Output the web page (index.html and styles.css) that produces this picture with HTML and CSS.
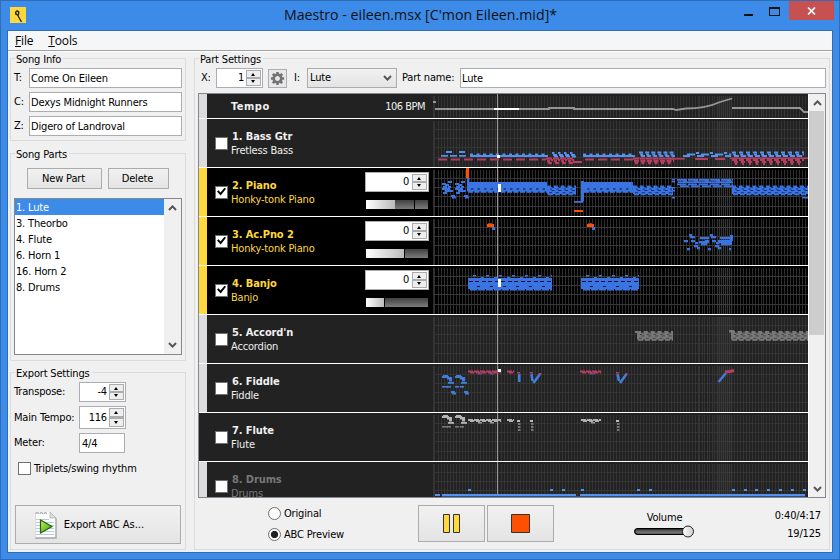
FILE: index.html
```html
<!DOCTYPE html>
<html lang="en">
<head>
<meta charset="utf-8">
<title>Maestro</title>
<link rel="stylesheet" href="styles.css">
</head>
<body>
<div class="window">
  <header class="titlebar">
    <svg class="app-icon" viewBox="0 0 16 16"><rect width="16" height="16" fill="#ffd93b"/><path d="M11.500 15 8.700 10 7.800 8 5.800 7 5.600 5.200 7.200 3.800 8.700 4.800 8.600 7 7.800 8.500" fill="none" stroke="#28240f" stroke-width="1.400"/></svg>
    <h1 class="title">Maestro - eileen.msx [C'mon Eileen.mid]*</h1>
    <div class="controls">
      <span class="minimize"></span>
      <span class="maximize"></span>
      <span class="close"><svg viewBox="0 0 9 8"><path d="M1 .5 8 7.5M8 .5 1 7.5" stroke="#fff" stroke-width="1.7"/></svg></span>
    </div>
  </header>
  <div class="client">
    <nav class="menubar"><span><u>F</u>ile</span><span><u>T</u>ools</span></nav>
    <div class="columns">
      <aside class="sidebar">
        <section class="panel song-info">
          <h2>Song Info</h2>
          <label class="field-row">T:<span class="input">Come On Eileen</span></label>
          <label class="field-row">C:<span class="input">Dexys Midnight Runners</span></label>
          <label class="field-row">Z:<span class="input">Digero of Landroval</span></label>
        </section>
        <section class="panel song-parts">
          <h2>Song Parts</h2>
          <div class="part-buttons"><button class="new">New Part</button><button class="delete">Delete</button></div>
          <div class="list">
            <ul><li class="selected">1. Lute</li><li>3. Theorbo</li><li>4. Flute</li><li>6. Horn 1</li><li>16. Horn 2</li><li>8. Drums</li></ul>
            <div class="scrollbar plain">
              <svg class="chev" viewBox="0 0 9 6"><path d="M1 5 4.5 1.4 8 5"/></svg>
              <svg class="chev" viewBox="0 0 9 6"><path d="M1 1 4.5 4.6 8 1"/></svg>
            </div>
          </div>
        </section>
        <section class="panel export">
          <h2>Export Settings</h2>
          <div class="setting"><span class="name">Transpose:</span><span class="spinner"><b>-4</b><i></i></span></div>
          <div class="setting tall"><span class="name">Main Tempo:</span><span class="spinner"><b>116</b><i></i></span></div>
          <div class="setting"><span class="name">Meter:</span><span class="input meter">4/4</span></div>
          <div class="swing"><span class="checkbox"></span>Triplets/swing rhythm</div>
          <button class="export-button">
            <svg width="24" height="28" viewBox="0 0 24 28">
              <defs><linearGradient id="go" x2="1" y2="1"><stop stop-color="#c4f25a"/><stop offset="1" stop-color="#2fa00c"/></linearGradient></defs>
              <path d="M1 1h15l6 6v20H1z" fill="#fcfdfe"/><path d="M22 7v20H1" fill="none" stroke="#a5a5a5" stroke-width="1.4"/><path d="M1.5 1v26" stroke="#ddd"/>
              <path d="M2 8.500h13M2 11.500h18M2 14.500h18M2 17.500h18M2 20.500h18M2 23.500h18" stroke="#b5cddd"/>
              <path d="M16 1v6h6z" fill="#ddd" stroke="#aaa" stroke-width=".7"/>
              <path d="M2 3a1.300 1.300 0 0 1 2.600 0M6 3a1.300 1.300 0 0 1 2.600 0M10 3a1.300 1.300 0 0 1 2.600 0" fill="none" stroke="#aaa" stroke-width="1.200"/>
              <path d="M6.500 9 18 15.500 6.500 22z" fill="url(#go)" stroke="#285f10" stroke-width="1.200"/>
            </svg>Export ABC As...</button>
        </section>
      </aside>
      <main class="panel part-settings">
        <h2>Part Settings</h2>
        <div class="toolbar">
          <span class="xlabel">X:</span><span class="spinner"><b>1</b><i></i></span>
          <span class="gear"><svg viewBox="-8 -8 16 16"><circle r="4" fill="none" stroke="#737373" stroke-width="2.800"/><g stroke="#737373" stroke-width="2.800"><path d="M0-4.500V-7M0 4.500V7M-4.500 0H-7M4.500 0H7M3.200-3.200 5-5M-3.200-3.200-5-5M3.200 3.200 5 5M-3.200 3.200-5 5"/></g></svg></span>
          <span class="ilabel">I:</span><span class="combo">Lute<svg class="chev" viewBox="0 0 9 6"><path d="M1 1 4.500 4.600 8 1"/></svg></span>
          <span class="plabel">Part name:</span><span class="input part-name">Lute</span>
        </div>
        <div class="tracks">
          <div class="rows">
            <div class="row tempo"><span class="gutter"></span><div class="head"><strong>Tempo</strong><span class="bpm">106 BPM</span></div><svg class="roll" data-track="tempo"></svg></div>
            <div class="row"><span class="gutter"></span><div class="head"><span class="checkbox"></span><div class="names"><strong>1. Bass Gtr</strong><span>Fretless Bass</span></div></div><svg class="roll" data-track="bass"></svg></div>
            <div class="row on"><span class="gutter"></span><div class="head"><span class="checkbox checked"></span><div class="names"><strong>2. Piano</strong><span>Honky-tonk Piano</span></div><div class="mix"><span class="spinner"><b>0</b><i></i></span><span class="level l2"></span></div></div><svg class="roll" data-track="piano"></svg></div>
            <div class="row on"><span class="gutter"></span><div class="head"><span class="checkbox checked"></span><div class="names"><strong>3. Ac.Pno 2</strong><span>Honky-tonk Piano</span></div><div class="mix"><span class="spinner"><b>0</b><i></i></span><span class="level l3"></span></div></div><svg class="roll" data-track="piano2"></svg></div>
            <div class="row on"><span class="gutter"></span><div class="head"><span class="checkbox checked"></span><div class="names"><strong>4. Banjo</strong><span>Banjo</span></div><div class="mix"><span class="spinner"><b>0</b><i></i></span><span class="level l4"></span></div></div><svg class="roll" data-track="banjo"></svg></div>
            <div class="row"><span class="gutter"></span><div class="head"><span class="checkbox"></span><div class="names"><strong>5. Accord'n</strong><span>Accordion</span></div></div><svg class="roll" data-track="accordion"></svg></div>
            <div class="row"><span class="gutter"></span><div class="head"><span class="checkbox"></span><div class="names"><strong>6. Fiddle</strong><span>Fiddle</span></div></div><svg class="roll" data-track="fiddle"></svg></div>
            <div class="row"><span class="gutter dark"></span><div class="head"><span class="checkbox"></span><div class="names"><strong>7. Flute</strong><span>Flute</span></div></div><svg class="roll" data-track="flute"></svg></div>
            <div class="row muted"><span class="gutter"></span><div class="head"><span class="checkbox"></span><div class="names"><strong>8. Drums</strong><span>Drums</span></div></div><svg class="roll" data-track="drums"></svg></div>
          </div>
          <div class="scrollbar">
            <svg class="chev" viewBox="0 0 9 6"><path d="M1 5 4.500 1.400 8 5"/></svg>
            <span class="thumb"></span>
            <svg class="chev" viewBox="0 0 9 6"><path d="M1 1 4.500 4.600 8 1"/></svg>
          </div>
        </div>
        <footer class="transport">
          <div class="radios"><div><span class="radio"></span>Original</div><div><span class="radio picked"></span>ABC Preview</div></div>
          <button class="play"><svg width="17" height="19"><path d="M.5.500h6v18h-6zM10.500.500h6v18h-6z" fill="#ffd93b" stroke="#333"/></svg></button>
          <button class="play"><svg width="19" height="19"><path d="M.5.500h18v18H.5z" fill="#ff4f00" stroke="#333"/></svg></button>
          <div class="volume"><span>Volume</span>
            <svg width="61" height="13" viewBox="0 0 61 13"><defs><linearGradient id="vt" x2="0" y2="1"><stop stop-color="#3c3c3c"/><stop offset="1" stop-color="#8c8c8c"/></linearGradient><linearGradient id="vk"><stop stop-color="#fff"/><stop offset="1" stop-color="#ccc"/></linearGradient></defs><rect x=".7" y="3.700" width="56" height="5.600" rx="2.800" fill="url(#vt)" stroke="#000" stroke-width="1.200"/><circle cx="54" cy="6.500" r="5.500" fill="url(#vk)" stroke="#222"/></svg>
          </div>
          <div class="times"><span>0:40/4:17</span><span>19/125</span></div>
        </footer>
      </main>
    </div>
  </div>
</div>
<script src="rolls.js"></script>
</body>
</html>
```
FILE: rolls.js
```js
const BLUE = '#5592ef', DEEP = '#3a73e2', RED = '#b63d5e', ORANGE = '#ff4f00', WHITE = '#fff';
const PLAYHEAD = 64;

const rect = (x, y, w, h, c) => `<rect x="${x}" y="${y}" width="${w}" height="${h}" fill="${c}"/>`;
// Repeats a small group of [dx, y, width] notes between x0 and x1.
function repeat(x0, x1, step, notes, c, h = 2) {
  let out = '';
  for (let x = x0; x < x1; x += step)
    for (const [dx, y, w] of notes) {
      const left = x + dx;
      if (left < x1) out += rect(left, y, Math.min(w, x1 - left), h, c);
    }
  return out;
}
const path = (d, c, w = 2) => `<path d="${d}" fill="none" stroke="${c}" stroke-width="${w}"/>`;

function barLines() {
  const xs = [];
  for (let x = 5; x < 266; x += 3.02) xs.push(x);
  for (let x = 266; x < 284; x += 2.5) xs.push(x);
  for (let x = 284; x < 299; x += 2) xs.push(x);
  for (let x = 301; x < 373; x += 2.95) xs.push(x);
  return xs;
}
function grid(active, tempo) {
  const c = active ? '#2e2e2e' : '#343434';
  let out = rect(0, 2, 2, 46, c);
  for (const x of barLines()) out += rect(Math.round(x), 2, 1, 46, c);
  if (!tempo) for (const y of [10, 19, 28, 38]) out += rect(0, y, 375, 1, active ? '#383838' : '#343434');
  return out + rect(283, 2, 17, 46, active ? '#ffffff0a' : '#ffffff06');
}

// A two-octave strummed figure: solid body with small gaps cut out of it.
const busy = (x0, x1, c = DEEP, y = 18, hole = '#10285a') =>
  rect(x0, y + 1, x1 - x0, 7, c) +
  repeat(x0, x1, 6.800, [[0, y - .5, 4]], c, 2) +
  repeat(x0 + 1, x1, 6.800, [[0, y + 7.500, 5]], c, 1.800) +
  repeat(x0 + 3, x1, 6.800, [[2, y + 1, 2], [0, y + 2.600, 2], [1.500, y + 4, 3], [-1, y + 6.300, 3]], hole, .9);
const intro = (y, c, low) => [9, 22].map((x, i) =>
  rect(x, y, 7, 2, c) + rect(x + 1, y - 1, 5, 1, c) + rect(x + 5, y + 1, 5, 2.500, c) + rect(x + 7, y + 3, 3, 2.500, c) +
  rect(x + 6, y + 6, 6, 1.800, c) + rect(x, y + 10, i ? 4 : 6, 1.600, low) + rect(x + 5, y + 10, 4, 1.600, low)).join('');
const dips = c => repeat(20, 38, 13, [[-2, 27, 4], [-1, 28.500, 4]], c, 2);
const phrase = (x0, x1, y, c) => repeat(x0, x1, 6, [[0, y, 5], [2, y + 1, 4]], c, 2);
const highBlock = (x0, x1) => rect(x0, 14, x1 - x0, 9.500, DEEP) +
  repeat(x0, x1, 6.500, [[1, 23, 5]], DEEP, 1.800) + repeat(x0 + 4, x1, 6.500, [[0, 20.500, 2.500]], '#09142e', 1);
const banjoBlock = (x0, x1) => rect(x0, 12, x1 - x0, 11, DEEP) +
  repeat(x0 + 5, x1, 13, [[0, 9, 3], [8, 11, 3]], DEEP, 1.500) +
  repeat(x0 + 1, x1, 13, [[0, 15, 4], [6, 15, 4], [8, 20, 3]], '#07142e', 1) +
  repeat(x0 + 2, x1, 8, [[0, 23, 7]], DEEP, 1.500);
const accordion = (x0, x1) => busy(x0, x1, '#787878', 16.500, '#3c3c3c');

const tracks = {
  tempo: () => rect(0, 7, 3, 2, '#999') +
    path('M2 15H116V14H141V15H240L243 16L253 14.500Q273 14.500 287 8L299 4.500M299 14H367L371 18H375', '#969696', 1.800) +
    rect(61, 14, 25, 2, WHITE),
  bass: () => repeat(8, 34, 9, [[0, 36, 7]], BLUE, 1.700) + rect(13, 32, 6, 2, BLUE) + rect(26, 32, 6, 2, BLUE) +
    repeat(37, 115, 6.500, [[0, 34.500, 3], [0, 36, 6], [3, 36, 4]], BLUE) +
    repeat(119, 143, 6, [[0, 33, 2.500], [1, 35, 4], [2, 36.500, 4]], BLUE) +
    repeat(150, 202, 6.500, [[0, 34.500, 3], [0, 36, 6], [3, 36, 4]], BLUE) +
    repeat(206, 242, 6.100, [[0, 32.500, 4], [1, 34.500, 3], [2, 36, 4]], BLUE) +
    repeat(250, 298, 14, [[0, 36, 7], [4, 34.500, 8], [13, 33, 3]], BLUE) +
    repeat(299, 371, 7, [[0, 32.500, 4], [1, 34.500, 3], [2, 36, 5]], BLUE) +
    repeat(5, 113, 13, [[0, 39.500, 9]], RED, 2) + repeat(152, 200, 13, [[0, 39.500, 9]], RED, 2) +
    repeat(113, 141, 7, [[0, 38.500, 6], [1, 41, 3], [2, 43, 4], [5, 40, 2]], RED, 2.200) + rect(140, 42, 9, 2, RED) +
    repeat(200, 241, 6.500, [[0, 38.500, 6], [1, 41, 5], [2, 43, 3]], RED, 2.200) + rect(236, 39, 16, 1.600, RED) +
    rect(262, 39, 13, 2, RED) + rect(282, 39, 10, 2, RED) + rect(297, 38.500, 78, 1.500, RED) +
    repeat(299, 371, 7, [[0, 40, 5], [2, 42, 4], [3, 44, 2]], RED, 2) + rect(64, 36, 3, 3, WHITE),
  piano: () => repeat(9, 33, 13, [[0, 15, 4], [6, 13, 4], [3, 16, 4], [1, 18, 4], [6, 18, 3], [0, 20, 8], [3, 22, 8], [1, 24, 4]], DEEP, 2) + dips(DEEP) +
    rect(33, 0, 3, 10, ORANGE) + rect(34, 10, 2.500, 6, DEEP) + highBlock(34, 114) + busy(114, 143) +
    rect(141, 33, 9, 1.800, DEEP) + rect(148, 13, 3, 20, DEEP) + rect(141, 42, 9, 2, ORANGE) + highBlock(150, 200) +
    busy(200, 240) + [11, 13, 19, 22, 29].map(y => rect(239, y, 3, 1.500, DEEP)).join('') +
    repeat(244, 300, 11, [[0, 11, 10], [1, 13.300, 11], [0, 15.500, 9], [3, 17.300, 9], [6, 12, 4]], DEEP, 1.800) +
    busy(299, 375) + rect(369, 29, 6, 1.500, DEEP) + rect(65, 16, 3, 8, WHITE),
  piano2: () => [54, 154].map(x => rect(x, 7, 7, 3, ORANGE) + rect(x + 1, 6, 4, 1, '#9b3b18') + rect(x + 5, 10, 3, 3, DEEP)).join('') +
    repeat(251, 298, 21, [[0, 23, 4], [5, 17, 3], [6, 19, 5], [3, 31, 3], [7, 23, 4], [11, 25, 3], [10, 28, 4], [13, 30, 3], [16, 20, 9], [15, 24, 10], [17, 26, 6]], DEEP, 2.300) +
    rect(287, 20, 12, 2, DEEP) + rect(285, 23, 14, 3, DEEP) + rect(288, 26, 11, 2, DEEP) + rect(297, 18, 3, 6, DEEP),
  banjo: () => banjoBlock(35, 119) + banjoBlock(148, 206) + rect(65, 13, 3, 8, WHITE),
  accordion: () => rect(202, 16, 3, 2, '#787878') + accordion(204, 240) + rect(296, 15, 5, 2.500, '#787878') + accordion(298, 375),
  fiddle: () => intro(12, '#407edb', '#407edb') + dips('#407edb') + phrase(35, 68, 6.500, RED) +
    rect(45, 9, 4, 1.500, '#71499b') + rect(57, 9, 4, 1.500, '#71499b') + phrase(74, 81, 6.500, RED) +
    rect(84, 8, 3, 1.500, RED) + rect(85, 10, 2.500, 8, '#407edb') + rect(97, 8, 3, 1.500, RED) +
    path('M98.500 10 99.500 17M100.500 19 107 10', '#407edb', 2.600) + rect(106, 9, 2.500, 1.500, RED) +
    phrase(147, 168, 6.500, RED) + rect(157, 9, 5, 1.500, '#71499b') + rect(183, 8, 3, 1.500, RED) +
    path('M184.500 10 186 17M187 19 193.500 10', '#407edb', 2.600) + rect(192, 9, 2.500, 1.500, RED) +
    path('M285.500 18 293 9', '#407edb', 2.500) + path('M292 8 297 7.500 301 6.500', RED, 3) + rect(65, 5, 3, 3, WHITE),
  flute: () => intro(3, '#b5b5b5', '#777') + phrase(35, 68, 6, '#b0b0b0') + phrase(74, 81, 6, '#b0b0b0') +
    phrase(148, 168, 6, '#b0b0b0') + [45, 57, 158].map(x => rect(x, 9, 4, 1.500, '#999')).join('') +
    [84, 97, 183].map(x => rect(x, 7, 3, 2, '#bbb') + [10, 13, 16].map(y => rect(x + 1, y, 2.500, 2, '#777')).join('')).join(''),
  drums: () => rect(2, 32, 5, 2, BLUE) + rect(9, 32, 134, 2.200, BLUE) + rect(147, 32, 225, 2.200, BLUE) + rect(9, 34, 363, 1, '#285087') +
    [35, 117, 129, 148, 204, 216, 299, 311, 322, 334, 346, 358, 370].map(x => rect(x, 27, 3, 2, BLUE)).join('')
};

document.querySelectorAll('.roll').forEach(svg => {
  const name = svg.dataset.track;
  const active = !!svg.closest('.on');
  svg.innerHTML = grid(active, name === 'tempo') + rect(PLAYHEAD, 0, 1, 49, '#969696') + tracks[name]();
});
```
FILE: styles.css
```css
* { box-sizing: border-box; }
body { margin: 0; width: 840px; height: 560px; overflow: hidden; font: 11px/14px "DejaVu Sans Condensed", "Noto Sans", sans-serif; letter-spacing: -.17px; color: #000; }
svg { display: block; }
.window { width: 840px; height: 560px; background: #3c8be8; border: 1px solid #2f6db5; padding: 0 6px 7px; display: flex; flex-direction: column; }
.titlebar { height: 29px; flex: none; display: flex; align-items: flex-start; }
.app-icon { width: 16px; height: 16px; margin: 6px 0 0 3px; }
.title { margin: 4px 0 0; flex: 1; text-align: center; padding-left: 71px; font: 14.200px/20px "Open Sans", sans-serif; letter-spacing: 0; color: #111; white-space: nowrap; }
.controls { display: flex; flex: none; align-items: flex-start; margin-right: -1px; }
.minimize { width: 9px; height: 2px; background: #111; margin: 13px 16px 0 0; }
.maximize { width: 11px; height: 9px; border: 1px solid #111; border-top-width: 2px; margin: 6px 9px 0 0; }
.close { width: 45px; height: 19px; background: #c75050; display: flex; align-items: center; justify-content: center; }
.close svg { width: 9px; height: 8px; }
.client { flex: 1; border: 1px solid #2f6db5; background: #f0f0f0; display: flex; flex-direction: column; }
.menubar { height: 20px; flex: none; background: #f5f6f7; border-bottom: 1px solid #a0a0a0; display: flex; gap: 15px; padding: 2px 7px; font: 12px/16px "Open Sans", sans-serif; }
.columns { flex: 1; display: flex; gap: 8px; padding: 6px 2px 2px; border-top: 1px solid #fff; min-height: 0; }
.sidebar { width: 176px; display: flex; flex-direction: column; }
.panel { border: 1px solid #dcdcdc; }
.panel h2 { margin: -6px 0 0 4px; padding: 0 2px 0 1px; width: max-content; height: 13px; font: inherit; line-height: 13px; background: #f0f0f0; }
.song-info { height: 83px; padding: 0 3px; }
.field-row { display: flex; align-items: center; justify-content: space-between; height: 20px; margin-bottom: 4px; white-space: nowrap; line-height: 16px; }
.song-info h2, .export h2 { margin-left: 1px; margin-bottom: 2px; }
.input { height: 20px; width: 153px; border: 1px solid #abadb3; background: #fff; padding: 2px 1px; line-height: 16px; white-space: nowrap; }
.song-parts { height: 208px; margin: 12px 0 11px; padding: 0 3px; }
.song-parts h2 { margin-left: 1px; }
button { font: inherit; letter-spacing: inherit; color: #000; background: linear-gradient(#f1f1f1, #e4e4e4); border: 1px solid #acacac; padding: 0; display: flex; align-items: center; justify-content: center; }
.part-buttons { display: flex; gap: 6px; margin: 7px 0 9px 13px; }
.part-buttons button { height: 21px; padding-right: 2px; }
.new { width: 75px; }
.delete { width: 61px; }
.list { height: 157px; width: 168px; border: 1px solid #828790; background: #fff; display: flex; }
.list ul { margin: 0; padding: 0; list-style: none; flex: 1; }
.list li { height: 16px; line-height: 17px; padding: 0 0 0 1px; }
.list .selected { background: #3c8be8; color: #fff; }
.scrollbar { width: 16px; background: #f0f0f0; display: flex; flex-direction: column; align-items: center; }
.scrollbar.plain { width: 17px; justify-content: space-between; padding: 6px 0 6px; }
.chev { width: 9px; height: 6px; flex: none; }
.chev path { fill: none; stroke: #555; stroke-width: 2; }
.export { height: 178px; padding: 0 3px; display: flex; flex-direction: column; flex: none; }
.export h2 { flex: none; }
.setting { height: 20px; margin-bottom: 4px; display: flex; align-items: center; flex: none; }
.setting.tall { height: 23px; }
.setting.tall .spinner { height: 23px; }
.setting .name { width: 65px; white-space: nowrap; }
.meter { width: 46px; padding-left: 2px; }
.spinner { width: 47px; height: 20px; border: 1px solid #abadb3; background: #fff; display: flex; padding: 1px; align-items: stretch; justify-content: flex-end; flex: none; }
.spinner b { font-weight: normal; align-self: center; margin: 0 2px 0 0; color: #000; }
.spinner i { width: 15px; border: 1px solid #acacac; position: relative; background: linear-gradient(transparent 44%, #acacac 44% 57%, transparent 57%), #eee; }
.spinner i::before, .spinner i::after { content: ""; position: absolute; left: 4px; border: 2.500px solid transparent; }
.spinner i::before { top: 2px; border-top: 0; border-bottom: 3px solid #000; }
.spinner i::after { bottom: 2px; border-bottom: 0; border-top: 3px solid #000; }
.swing { display: flex; gap: 3px; align-items: center; margin: 5px 0 0 4px; height: 13px; white-space: nowrap; }
.checkbox { width: 13px; height: 13px; border: 1px solid #707070; background: #fff; flex: none; position: relative; }
.checkbox.checked::after { content: ""; position: absolute; inset: 0; background: #000; clip-path: polygon(1px 5px, 2.500px 3.800px, 4.500px 6px, 8.500px 1.200px, 10px 2.200px, 4.700px 9px); }
.export-button { width: 166px; height: 39px; margin: 30px 0 0 1px; gap: 6px; padding-right: 18px; flex: none; white-space: nowrap; letter-spacing: 0; }
.export-button svg { margin: 1px 0 0; }
.part-settings { width: 636px; display: flex; flex-direction: column; padding: 0 2px 0 3px; }
.part-settings h2 { flex: none; margin-left: 1px; }
.toolbar { display: flex; align-items: center; height: 20px; margin: 2px 0 5px; padding-left: 3px; flex: none; white-space: nowrap; line-height: 16px; }
.xlabel { width: 15px; }
.gear { width: 19px; height: 19px; border: 1px solid #abadb3; background: #e8e8e8; margin: 0 7px 0 5px; padding: 1px; }
.gear svg { width: 15px; height: 15px; }
.ilabel { width: 13px; }
.combo { width: 90px; height: 20px; border: 1px solid #acacac; background: linear-gradient(#f1f1f1, #e4e4e4); padding: 0 4px 0 2px; display: flex; align-items: center; justify-content: space-between; margin-right: 5px; }
.plabel { width: 58px; }
.part-name { width: 366px; }
.tracks { width: 628px; height: 405px; border: 1px solid #828790; display: flex; background: #fff; flex: none; }
.rows { width: 609px; margin-right: 1px; overflow: hidden; }
.row { display: flex; height: 49px; border-bottom: 1px solid #fff; background: #222; color: #f0f0f0; }
.row.tempo { height: 25px; }
.row.on { background: #000; color: #ffd93b; }
.row.muted { color: #777; }
.gutter { width: 8px; background: #dcdcdc; }
.gutter.dark { background: #222; }
.on .gutter { background: #ffd93b; }
.head { width: 226px; display: flex; align-items: center; padding: 0 4px 0 8px; }
.tempo .head { justify-content: space-between; padding: 1px 8px 0 24px; }
.bpm { letter-spacing: -.5px; }
.head .checkbox { margin: 0 3px 0 0; }
.names { display: flex; flex-direction: column; flex: 1; white-space: nowrap; padding-top: 1px; }
.names strong { padding-left: 1px; letter-spacing: -.1px; }
.tempo strong { letter-spacing: .5px; }
.mix { display: flex; flex-direction: column; gap: 8px; margin-top: -3px; }
.mix .spinner { width: 64px; }
.mix .spinner b { margin-right: 3px; }
.level { height: 9px; width: 62px; margin-left: 1px; background: linear-gradient(#404040, #7c7c7c); position: relative; }
.level::before { content: ""; position: absolute; left: 0; top: 0; height: 9px; background: linear-gradient(90deg, #fff, #ccc0), #bbb; }
.l2::before { width: 29px; }
.l2::after { content: ""; position: absolute; left: 48px; width: 1px; height: 9px; background: #000; }
.l3::before { width: 38px; border-right: 1px solid #000; }
.l4::before { width: 18px; border-right: 1px solid #000; }
.roll { width: 375px; height: 48px; flex: none; }
.tempo .roll { height: 24px; }
.tracks .scrollbar { padding: 6px 0 5px; }
.tracks .thumb { width: 15px; height: 224px; background: #cdcdcd; margin: 5px 0 auto; align-self: flex-start; }
.transport { display: flex; align-items: flex-start; padding: 7px 6px 0 70px; white-space: nowrap; }
.radios { width: 150px; display: flex; flex-direction: column; gap: 8px; padding-top: 2px; }
.radios div { display: flex; align-items: center; gap: 3px; height: 13px; }
.radio { width: 13px; height: 13px; border: 1px solid #707070; border-radius: 50%; background: #fff; }
.radio.picked { background: radial-gradient(#222 3.300px, #fff 4px); }
.play { width: 67px; height: 37px; margin-right: 2px; }
.volume { display: flex; flex-direction: column; align-items: center; margin-left: 78px; padding-top: 6px; }
.times { flex: 1; display: flex; flex-direction: column; align-items: flex-end; gap: 4px; padding-top: 4px; }
```
